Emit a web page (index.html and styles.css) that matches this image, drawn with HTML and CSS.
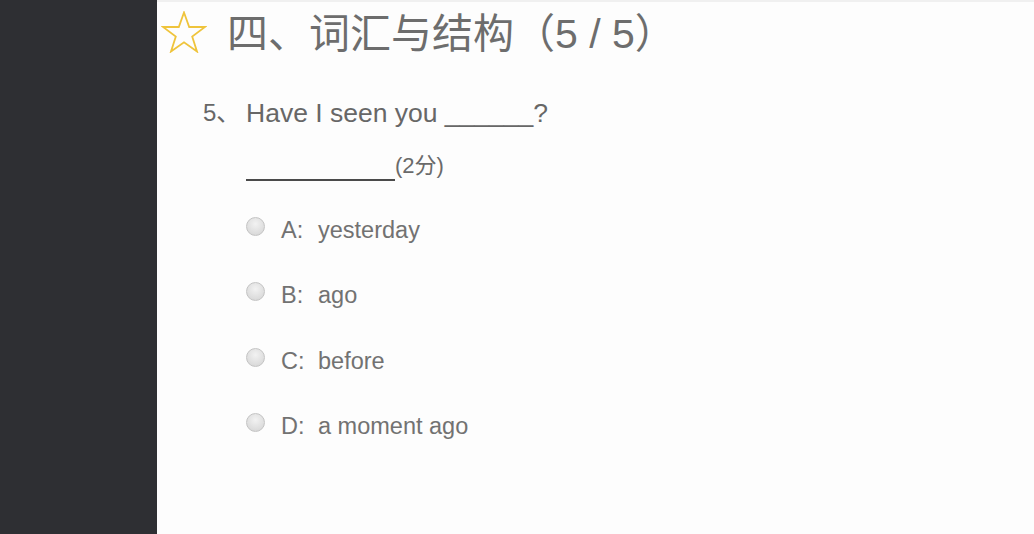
FILE: index.html
```html
<!DOCTYPE html>
<html lang="zh">
<head>
<meta charset="utf-8">
<title>词汇与结构</title>
<link rel="stylesheet" href="styles.css">
</head>
<body>
<div class="page">
  <aside class="sidebar"></aside>
  <main class="main">
    <div class="title">
      <svg class="star" width="46" height="42" viewBox="0 0 46 42">
        <polygon points="23,1.5 28.2,16 44,16 31.2,25.6 36,40.5 23,31.3 10,40.5 14.8,25.6 2,16 17.8,16" fill="none" stroke="#efc43c" stroke-width="1.8" stroke-linejoin="miter"/>
      </svg>
      <h1 class="title-text">四、词汇与结构（5 / 5）</h1>
    </div>
    <div class="question">
      <div class="q-line">
        <span class="q-num">5、</span>
        <span class="q-text">Have I seen you ______?</span>
      </div>
      <div class="blank-line">
        <span class="blank"></span>
        <span class="score">(2分)</span>
      </div>
      <ul class="options">
        <li class="option"><span class="radio"></span><span class="opt-label">A:</span><span class="opt-text">yesterday</span></li>
        <li class="option"><span class="radio"></span><span class="opt-label">B:</span><span class="opt-text">ago</span></li>
        <li class="option"><span class="radio"></span><span class="opt-label">C:</span><span class="opt-text">before</span></li>
        <li class="option"><span class="radio"></span><span class="opt-label">D:</span><span class="opt-text">a moment ago</span></li>
      </ul>
    </div>
  </main>
</div>
</body>
</html>
```

FILE: styles.css
```css
html, body {
  margin: 0;
  padding: 0;
  height: 100%;
}
body {
  font-family: "Liberation Sans", "Noto Sans CJK SC", sans-serif;
  background: #fdfdfd;
  overflow: hidden;
}
.page {
  display: flex;
  height: 534px;
}
.sidebar {
  width: 157px;
  flex: none;
  background: #2e2f33;
}
.main {
  flex: 1;
  background: #fdfdfd;
  border-top: 2px solid #f0f0f0;
  display: flex;
  flex-direction: column;
}
.title {
  display: flex;
  align-items: center;
  padding-left: 4px;
  height: 58px;
  margin-top: 1px;
}
.star {
  display: block;
  flex: none;
}
.title-text {
  margin: 3px 0 0 20px;
  font-weight: normal;
  font-size: 41px;
  line-height: 58px;
  color: #6d6d6d;
}
.question {
  margin-top: 32px;
  padding-left: 46px;
}
.q-line {
  display: flex;
  font-size: 26.5px;
  line-height: 40px;
  color: #676767;
}
.q-num {
  width: 43px;
  flex: none;
  font-size: 24px;
}
.blank-line {
  display: flex;
  align-items: flex-end;
  margin-left: 43px;
  margin-top: 14px;
  height: 34px;
}
.blank {
  width: 149px;
  height: 0;
  border-bottom: 2px solid #4a4a4a;
}
.score {
  font-size: 22px;
  line-height: 25px;
  color: #6a6a6a;
  padding-bottom: 3px;
}
.options {
  list-style: none;
  margin: 17px 0 0 43px;
  padding: 0;
}
.option {
  display: flex;
  align-items: flex-start;
  height: 65.4px;
  font-size: 23.5px;
  line-height: 65.4px;
  color: #727272;
}
.radio {
  flex: none;
  width: 17px;
  height: 17px;
  border-radius: 50%;
  border: 1px solid #c4c4c4;
  background: radial-gradient(circle at 50% 35%, #f2f2f2 0%, #dcdcdc 70%, #d0d0d0 100%);
  margin-top: 19px;
  margin-right: 16px;
}
.opt-label {
  width: 37px;
  flex: none;
}
```
